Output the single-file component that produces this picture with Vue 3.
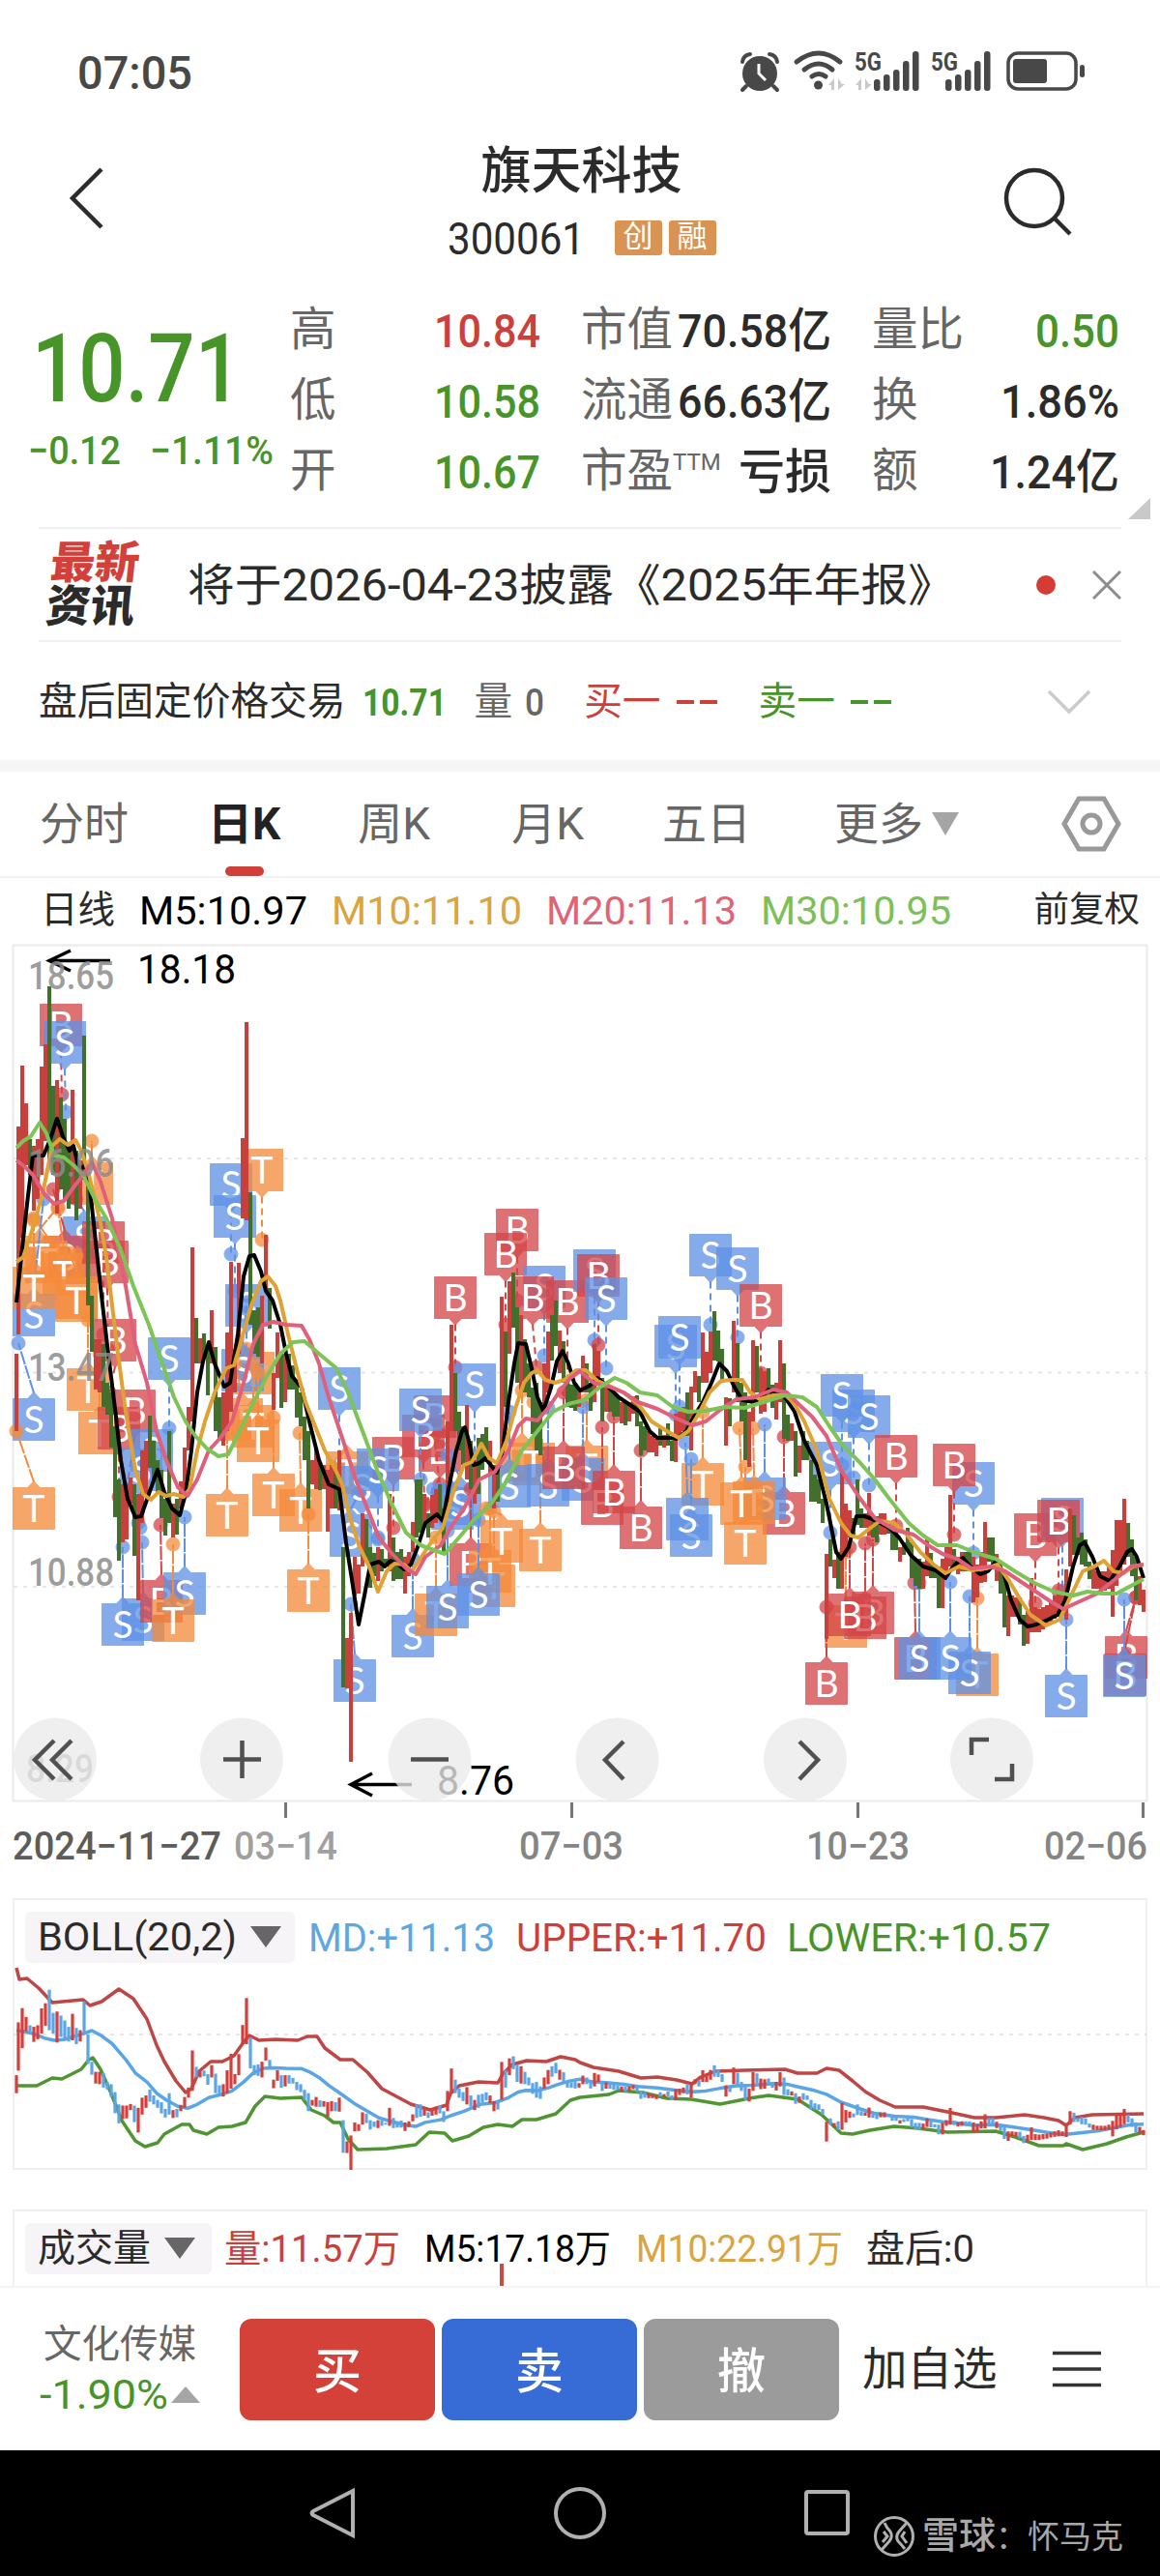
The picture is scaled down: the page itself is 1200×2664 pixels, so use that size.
<template>
  <div class="phone">
    <div class="status">
      <Num text="07:05" :w="119" :size="49" :weight="500" />
      <svg class="status-icons" width="360" height="50" viewBox="764 49 360 50">
        <circle cx="786" cy="76" r="18" />
        <g class="stroke">
          <path d="M768 64q1-7 8-8M804 64q-1-7-8-8M772 89l-4 4M800 89l4 4" stroke-width="4" />
          <path d="M824 64q23-18 45 0M832 72q15-12 29 0M840 79q7-5 14 0" stroke-width="5" />
        </g>
        <path d="M785 66v10l7 7" fill="none" stroke="#fff" stroke-width="3" />
        <circle cx="846.500" cy="88" r="4.500" />
        <path class="pale" d="M863 81v12h-3v-5h-3zM867 81v12l7-6h-3zM891 81v12h-3v-5h-3zM895 81v12l7-6h-3z" />
        <text x="884" y="73" textLength="28" lengthAdjust="spacingAndGlyphs">5G</text>
        <text x="963" y="73" textLength="28" lengthAdjust="spacingAndGlyphs">5G</text>
        <template v-for="sx in [904, 978]" :key="sx">
          <rect v-for="(bh, i) in [12, 17, 22, 31, 41]" :key="i" :x="sx + i * 10" :y="94 - bh" width="6.500" :height="bh" rx="3" />
        </template>
        <rect x="1043" y="55" width="70" height="37" rx="10" fill="none" stroke="#484848" stroke-width="3.500" />
        <rect x="1048" y="61" width="35" height="25" rx="3" />
        <rect x="1117" y="67" width="5" height="13" rx="2.500" />
      </svg>
    </div>

    <header class="header">
      <svg class="back" width="40" height="68" viewBox="0 0 40 68"><path d="M35 4L5 34L35 64" /></svg>
      <div class="title">
        <h1>旗天科技</h1>
        <div class="code">
          <Num text="300061" :w="142" :size="47" />
          <span class="badge">创</span>
          <span class="badge">融</span>
        </div>
      </div>
      <svg class="search" width="74" height="74" viewBox="0 0 74 74"><circle cx="32" cy="32" r="29" /><path d="M53 53l16 16" /></svg>
    </header>

    <section class="quote">
      <div class="price green">
        <Num text="10.71" :w="217" :size="99" :weight="500" />
        <div class="change">
          <Num text="−0.12" :w="96" :size="41" :weight="500" />
          <Num text="−1.11%" :w="128" :size="41" :weight="500" />
        </div>
      </div>
      <div class="stats">
        <div v-for="s in stats" :key="s.label" class="stat">
          <span class="stat-label">{{ s.label }}<sup v-if="s.sup">{{ s.sup }}</sup></span>
          <Num :class="s.color" :text="s.value" :w="s.w" :size="49" :weight="500" />
        </div>
      </div>
      <i class="corner"></i>
    </section>

    <section class="news">
      <div class="news-logo"><b>最新</b><b>资讯</b></div>
      <Num class="news-text" text="将于2026-04-23披露《2025年年报》" :w="794" :size="46" />
      <i class="dot"></i>
      <svg width="30" height="30" viewBox="0 0 30 30"><path d="M1 1l28 28M29 1L1 29" /></svg>
    </section>

    <section class="after">
      <span>盘后固定价格交易</span>
      <Num class="green a1" text="10.71" :w="87" :size="39" :weight="700" />
      <span class="gray a2">量</span>
      <Num class="gray a3" text="0" :w="20" :size="39" :weight="500" />
      <span class="red a4">买一</span>
      <i class="dashes red"></i>
      <span class="green a5">卖一</span>
      <i class="dashes green"></i>
      <svg class="down" width="46" height="28" viewBox="0 0 46 28"><path d="M2 3l21 21L44 3" /></svg>
    </section>

    <nav class="tabs">
      <span class="t-time">分时</span>
      <span class="t-day">日K</span>
      <span class="t-week">周K</span>
      <span class="t-month">月K</span>
      <span class="t-five">五日</span>
      <span class="t-more">更多</span>
      <svg class="more-tri" width="28" height="24" viewBox="0 0 28 24"><path d="M0 0h28L14 24z" /></svg>
      <svg class="hex" width="62" height="58" viewBox="0 0 62 58"><path d="M18 3h26l15 26-15 26H18L3 29z" /><circle cx="31" cy="29" r="9" /></svg>
    </nav>

    <div class="ma">
      <span>日线</span>
      <Num text="M5:10.97" :w="174" :size="41" class="black" />
      <Num text="M10:11.10" :w="197" :size="41" class="gold" />
      <Num text="M20:11.13" :w="197" :size="41" class="pink" />
      <Num text="M30:10.95" :w="197" :size="41" class="lime" />
      <span class="fq">前复权</span>
    </div>

    <svg class="kline" width="1200" height="889" viewBox="0 975 1200 889">
      <path class="frame" d="M13.500 977.500H1186.500V1862.500H13.500z" />
      <path class="grid" d="M14 1198H1186M14 1419.500H1186M14 1641H1186" />
      <g v-for="(m, i) in marks" :key="'m' + i" :class="'mark mark-' + m.type">
        <line :x1="m.x" :y1="m.edge" :x2="m.px" :y2="m.py" :stroke-dasharray="m.dash" />
        <circle :cx="m.px" :cy="m.py" r="7" />
        <path class="tag" :d="m.shape" />
        <text :x="m.x" :y="m.y + 14">{{ m.type }}</text>
      </g>
      <rect v-for="c in candles" :key="c.x" :class="c.up ? 'up' : 'fall'" :x="c.x - 2" :y="c.hi" width="4.100" :height="c.lo - c.hi" />
      <polyline class="line" stroke="#000" :points="ma5" />
      <polyline class="line" stroke="#dfa233" :points="ma10" />
      <polyline class="line" stroke="#e0607c" :points="ma20" />
      <polyline class="line" stroke="#7cc455" :points="ma30" />
      <path class="arrow" d="M114 993.500H51M73 983L51 993.500L73 1004" />
      <text class="peak" x="142" y="1017" textLength="102" lengthAdjust="spacingAndGlyphs">18.18</text>
      <path class="arrow" d="M426 1845.500H363M385 1834L363 1845.500L385 1857" />
      <text class="peak" x="452" y="1856" textLength="80" lengthAdjust="spacingAndGlyphs">8.76</text>
      <g class="axis">
        <text v-for="l in axis" :key="l.t" :x="l.x" :y="l.y" :textLength="l.w" lengthAdjust="spacingAndGlyphs">{{ l.t }}</text>
      </g>
      <g class="ctrl">
        <circle v-for="x in [57, 250, 444.500, 638.500, 833, 1026]" :key="x" :cx="x" cy="1819.500" r="43" />
        <path d="M56 1800L36 1820L56 1840M74 1800L54 1820L74 1840" />
        <path d="M231 1819.500H270M250.500 1800V1839M425 1819.500H464" />
        <path d="M645 1801L626 1820L645 1840M827 1801L846 1820L827 1840" />
        <path d="M1005 1815V1799H1023M1029 1840H1047V1824" />
      </g>
    </svg>

    <div class="dates">
      <i v-for="n in 4" :key="n" :class="'tick tick-' + n"></i>
      <Num text="2024−11−27" :w="216" :size="40" :weight="500" class="first" />
      <Num text="03−14" :w="107" :size="40" :weight="500" class="d2" />
      <Num text="07−03" :w="108" :size="40" :weight="500" class="d3" />
      <Num text="10−23" :w="107" :size="40" :weight="500" class="d4" />
      <Num text="02−06" :w="107" :size="40" :weight="500" class="d5" />
    </div>

    <section class="panel boll">
      <div class="panel-head">
        <div class="picker">
          <Num text="BOLL(20,2)" :w="206" :size="40" />
          <svg width="32" height="22" viewBox="0 0 32 22"><path d="M0 0h32L16 22z" /></svg>
        </div>
        <Num text="MD:+11.13" :w="193" :size="41" class="blue" />
        <Num text="UPPER:+11.70" :w="259" :size="41" class="red" />
        <Num text="LOWER:+10.57" :w="273" :size="41" class="green" />
      </div>
      <svg class="boll-chart" width="1172" height="213" viewBox="14 2031 1172 213">
        <path class="grid" d="M14 2104H1186" />
        <polyline class="line" stroke="#c04545" :points="upper" />
        <polyline class="line" stroke="#4f9632" :points="lower" />
        <polyline class="line" stroke="#5aa5e6" :points="mid" />
        <rect v-for="c in candles" :key="c.x" :fill="c.up ? '#d3403c' : '#5aa5e6'" :x="c.x - 1.600" :y="bollY(c.hi)" width="3.200" :height="bollY(c.lo) - bollY(c.hi)" />
      </svg>
    </section>

    <section class="panel volume">
      <div class="panel-head">
        <div class="picker">
          <span>成交量</span>
          <svg width="32" height="22" viewBox="0 0 32 22"><path d="M0 0h32L16 22z" /></svg>
        </div>
        <Num text="量:11.57万" :w="182" :size="39" class="red" />
        <Num text="M5:17.18万" :w="193" :size="39" class="black v5" />
        <Num text="M10:22.91万" :w="214" :size="39" class="gold v10" />
        <Num text="盘后:0" :w="112" :size="39" />
      </div>
      <i class="vol-bar"></i>
    </section>

    <footer class="actions">
      <div class="sector">
        <span>文化传媒</span>
        <div class="sector-change">
          <Num text="-1.90%" :w="133" :size="42" class="green" />
          <svg width="30" height="17" viewBox="0 0 30 17"><path d="M0 17h30L15 0z" /></svg>
        </div>
      </div>
      <button class="buy">买</button>
      <button class="sell">卖</button>
      <button class="cancel">撤</button>
      <span class="add">加自选</span>
      <svg class="menu" width="50" height="40" viewBox="0 0 50 40"><path d="M0 3.500H50M0 20H50M0 36.500H50" /></svg>
    </footer>

    <div class="sysnav">
      <svg width="564" height="60" viewBox="319 2569 564 60">
        <path d="M365 2576V2622L324 2601Q321 2599 324 2597z" />
        <circle cx="600" cy="2599" r="25" />
        <rect x="834" y="2577" width="43" height="43" rx="2" />
      </svg>
      <div class="watermark">
        <svg width="44" height="44" viewBox="0 0 44 44"><circle cx="22" cy="22" r="19.500" /><path d="M12 8q2 5 6 9 3 5-1 10l-8 9M35 8l-8 9q-4 5-1 10 4 4 7 8M11 17l4 5-5 6M33 17l-3 5 5 7" /></svg>
        <span><b>雪球</b>：怀马克</span>
      </div>
    </div>
  </div>
</template>

<script setup>
import { h } from 'vue';

// Condensed numerals: text is squeezed to a given advance width, box height is the cap height
const Num = (props) =>
  h('svg', { class: 'num', width: props.w, height: Math.round(props.size * 0.71) }, [
    h('text', {
      x: 0,
      y: Math.round(props.size * 0.71),
      'font-size': props.size,
      'font-weight': props.weight || 400,
      fill: 'currentColor',
      textLength: props.w,
      lengthAdjust: 'spacingAndGlyphs',
    }, props.text),
  ]);
Num.props = ['text', 'w', 'size', 'weight'];

const stats = [
  { label: '高', value: '10.84', w: 110, color: 'red' },
  { label: '市值', value: '70.58亿', w: 159 },
  { label: '量比', value: '0.50', w: 87, color: 'green' },
  { label: '低', value: '10.58', w: 110, color: 'green' },
  { label: '流通', value: '66.63亿', w: 159 },
  { label: '换', value: '1.86%', w: 123 },
  { label: '开', value: '10.67', w: 110, color: 'green' },
  { label: '市盈', sup: 'TTM', value: '亏损', w: 96 },
  { label: '额', value: '1.24亿', w: 134 },
];

const axis = [
  { t: '18.65', x: 29, y: 1023, w: 89 },
  { t: '16.06', x: 29, y: 1217, w: 89 },
  { t: '13.47', x: 29, y: 1428, w: 89 },
  { t: '10.88', x: 29, y: 1640, w: 89 },
  { t: '8.29', x: 27, y: 1843, w: 70 },
];

// x high low, in chart pixels; r = rising, g = falling
const raw = `17r1400 1480,19r1165 1380,23r1102 1280,27r1141 1205,31g1178 1215,35r1185 1252,39r1178 1240,43r1103 1215,47r1080 1180,51g1020 1200,55g1123 1215,59r1117 1255,63g1135 1230,67g1157 1240,71g1185 1250,75r1127 1245,79g1190 1262,83r1200 1250,87g1071 1220,91g1218 1350,95g1340 1398,99r1385 1437,103r1385 1440,107g1390 1455,111g1430 1463,115g1440 1497,119g1475 1569,123g1530 1614,127r1535 1595,131r1535 1592,135r1528 1555,139g1535 1609,143r1545 1655,147r1500 1575,151r1490 1545,155g1464 1518,159g1490 1530,163g1510 1545,167g1520 1570,171g1550 1588,175g1480 1575,179r1555 1590,183g1550 1587,187r1532 1560,191r1497 1545,195r1455 1500,199r1290 1470,203g1363 1410,207r1384 1410,211g1379 1405,215g1395 1443,219r1355 1410,223g1393 1480,227g1445 1490,231r1440 1495,235r1378 1480,239r1305 1460,243r1395 1440,247r1306 1400,251r1177 1260,255r1057 1262,259g1233 1370,263g1355 1400,267g1352 1403,271r1340 1410,275r1277 1335,279g1332 1374,283r1420 1458,287r1378 1425,291g1400 1456,295r1400 1450,299g1400 1437,303g1412 1437,307g1430 1466,311g1440 1475,315g1465 1510,319g1480 1560,323r1510 1535,327r1497 1540,331g1512 1541,335r1515 1540,339r1520 1584,343r1515 1560,347g1520 1560,351r1500 1562,355g1600 1745,359r1694 1746,363r1668 1822,367r1610 1650,371r1618 1648,375r1565 1620,379g1571 1613,383g1600 1642,387g1606 1630,391r1600 1635,395g1602 1625,399g1612 1620,403r1545 1625,407g1590 1635,411g1605 1633,415g1602 1633,419r1610 1648,423r1605 1630,427r1574 1605,431g1530 1590,435g1530 1585,439r1545 1580,443g1565 1590,447r1546 1580,451r1540 1575,455g1535 1570,459g1560 1608,463r1470 1560,467r1370 1480,471g1420 1480,475g1460 1500,479g1475 1515,483r1453 1530,487g1490 1540,491r1510 1555,495g1487 1545,499g1483 1520,503g1476 1512,507r1490 1525,511r1515 1560,515g1520 1553,519r1341 1510,523g1377 1455,527r1325 1400,531g1316 1373,535g1352 1430,539r1360 1437,543g1385 1440,547g1410 1445,551g1435 1483,555g1430 1500,559g1450 1505,563r1410 1460,567r1377 1440,571g1360 1407,575g1345 1392,579r1376 1420,583g1387 1430,587g1425 1455,591g1432 1456,595g1430 1459,599r1435 1455,603r1402 1440,607g1410 1440,611g1430 1459,615r1390 1450,619r1397 1430,623g1425 1470,627r1432 1460,631g1435 1460,635g1440 1465,639g1445 1465,643r1450 1472,647g1450 1474,651r1450 1470,655r1444 1462,659g1443 1475,663g1470 1505,667g1475 1500,671r1480 1502,675r1485 1502,679r1488 1506,683g1476 1495,687r1484 1497,691g1472 1495,695g1490 1511,699r1462 1512,703r1460 1488,707r1455 1480,711g1440 1485,715r1434 1500,719r1418 1440,723g1423 1450,727r1378 1430,731r1398 1430,735r1377 1420,739g1356 1407,743g1376 1408,747g1395 1430,751r1445 1495,755g1446 1475,759r1366 1440,763g1389 1450,767g1430 1470,771g1440 1510,775r1460 1517,779r1386 1470,783g1392 1440,787r1415 1462,791r1418 1460,795g1415 1445,799g1432 1456,803r1430 1468,807r1386 1450,811g1410 1488,815g1463 1490,819r1472 1490,823g1480 1527,827r1495 1523,831g1480 1510,835g1490 1510,839g1510 1553,843g1525 1553,847g1530 1555,851g1550 1575,855r1607 1695,859g1592 1620,863r1613 1632,867g1605 1643,871r1523 1643,875r1555 1610,879r1562 1590,883g1570 1587,887g1530 1577,891g1560 1580,895r1565 1580,899r1544 1588,903g1568 1590,907g1568 1595,911r1565 1587,915r1565 1587,919g1575 1586,923g1580 1603,927g1585 1603,931r1600 1615,935g1595 1608,939g1580 1605,943g1595 1632,947g1612 1640,951g1612 1643,955r1615 1643,959r1592 1630,963g1606 1632,967g1618 1632,971g1620 1663,975r1612 1663,979r1600 1625,983r1546 1620,987g1602 1622,991r1610 1628,995r1605 1625,999g1605 1625,1003g1605 1625,1007r1610 1657,1011r1618 1652,1015r1605 1637,1019r1574 1636,1023g1590 1615,1027g1590 1623,1031r1607 1635,1035g1615 1648,1039g1630 1683,1043r1650 1692,1047r1650 1672,1051r1652 1672,1055g1652 1680,1059g1670 1702,1063r1665 1700,1067r1632 1688,1071r1662 1688,1075r1664 1688,1079r1662 1685,1083r1660 1682,1087r1655 1677,1091r1650 1674,1095r1645 1672,1099r1650 1670,1103r1623 1675,1107r1560 1620,1111g1567 1608,1115g1590 1608,1119g1585 1618,1123g1592 1620,1127g1615 1633,1131r1620 1643,1135r1625 1643,1139r1625 1645,1143r1625 1645,1147r1620 1643,1151r1603 1672,1155r1572 1640,1159r1572 1630,1163r1550 1618,1167g1575 1610,1171g1592 1630,1175g1610 1655,1179r1630 1660,1183r1644 1667`;
const candles = raw.split(',').map((s) => {
  const [, x, dir, hi, lo] = s.match(/(\d+)([rg])(\d+) (\d+)/);
  return { x: +x, up: dir === 'r', hi: +hi, lo: +lo };
});

const ma5 = '17,1347 22,1300 28,1245 34,1195 45,1195 52,1178 59,1157 66,1178 72,1190 76,1185 82,1210 88,1205 92,1220 98,1275 105,1340 112,1400 120,1465 125,1510 132,1550 140,1569 146,1568 154,1545 163,1520 170,1543 178,1560 186,1567 192,1545 198,1500 204,1440 210,1408 216,1388 222,1410 232,1434 238,1430 246,1380 252,1320 258,1299 263,1298 270,1315 275,1335 282,1345 290,1370 296,1400 302,1423 312,1435 320,1470 330,1510 340,1535 351,1540 358,1595 365,1640 371,1680 377,1650 383,1618 392,1615 398,1620 404,1614 412,1618 418,1623 425,1618 432,1600 440,1575 452,1566 458,1573 464,1540 472,1500 478,1480 481,1476 485,1490 490,1515 496,1513 502,1508 514,1523 520,1500 526,1450 532,1410 536,1389 544,1390 550,1415 556,1445 562,1459 570,1435 576,1408 582,1397 588,1410 594,1430 600,1438 610,1433 618,1425 628,1433 640,1445 652,1453 662,1460 672,1480 680,1487 692,1487 700,1488 710,1480 718,1465 727,1450 736,1430 744,1410 752,1418 760,1435 768,1448 780,1450 788,1445 795,1437 800,1442 806,1438 814,1448 822,1460 832,1490 845,1515 855,1555 865,1605 870,1612 878,1600 886,1568 894,1568 900,1570 910,1575 920,1580 930,1590 942,1608 955,1620 968,1624 978,1632 986,1620 996,1611 1004,1620 1014,1628 1022,1625 1030,1615 1038,1626 1046,1655 1055,1675 1063,1682 1072,1680 1084,1675 1094,1670 1102,1655 1110,1620 1117,1598 1122,1595 1130,1610 1138,1630 1148,1635 1158,1620 1166,1605 1171,1602 1176,1610 1183,1632';
const ma10 = '17,1305 24,1300 34,1270 44,1235 54,1185 62,1178 70,1184 78,1179 84,1190 92,1215 98,1240 104,1265 110,1300 116,1350 122,1400 130,1460 140,1520 148,1545 156,1551 164,1543 172,1547 180,1545 190,1548 196,1540 204,1500 212,1470 222,1440 234,1415 242,1412 250,1385 260,1350 270,1325 277,1320 285,1330 290,1345 298,1380 308,1420 316,1450 326,1475 336,1500 346,1518 354,1535 362,1570 372,1600 382,1620 391,1646 400,1625 408,1617 418,1618 426,1625 436,1610 446,1595 458,1580 470,1540 480,1515 488,1512 498,1493 506,1508 514,1513 524,1490 532,1460 542,1430 550,1420 556,1417 564,1427 574,1430 584,1427 596,1417 606,1417 618,1428 630,1433 645,1440 660,1452 674,1470 690,1480 702,1487 712,1480 724,1460 734,1440 746,1428 758,1427 768,1427 776,1440 786,1447 800,1443 812,1442 822,1452 832,1470 845,1500 858,1550 870,1575 880,1588 888,1590 898,1582 910,1573 925,1575 938,1587 952,1605 966,1618 978,1627 992,1620 1006,1624 1020,1622 1032,1618 1044,1635 1056,1655 1066,1670 1082,1681 1096,1675 1108,1650 1120,1625 1132,1620 1142,1614 1152,1625 1162,1627 1172,1620 1183,1618';
const ma20 = '17,1200 25,1206 34,1215 46,1235 56,1245 66,1242 76,1228 86,1215 95,1202 104,1222 116,1260 130,1330 140,1390 152,1430 162,1480 172,1510 184,1538 194,1547 204,1530 216,1500 228,1487 240,1470 252,1430 262,1390 272,1370 283,1367 296,1370 312,1371 320,1385 330,1410 340,1445 355,1490 368,1530 380,1560 392,1590 404,1605 420,1622 430,1628 440,1610 456,1598 466,1580 480,1560 496,1530 512,1522 526,1500 536,1475 544,1467 556,1469 568,1455 578,1440 590,1425 600,1418 614,1430 630,1434 645,1440 660,1450 680,1457 700,1467 716,1474 730,1470 745,1458 762,1447 780,1445 800,1437 814,1440 826,1452 840,1465 855,1485 870,1520 890,1550 905,1570 925,1582 945,1587 960,1598 975,1607 990,1612 1005,1622 1025,1620 1040,1625 1055,1635 1070,1645 1085,1655 1100,1664 1115,1657 1135,1648 1155,1632 1170,1620 1183,1618';
const ma30 = '17,1187 24,1180 32,1175 41,1161 48,1172 56,1195 66,1197 76,1205 86,1215 98,1240 110,1260 124,1290 138,1330 154,1370 168,1410 180,1445 192,1470 202,1485 214,1498 226,1506 236,1504 248,1480 260,1455 275,1425 290,1400 303,1388 315,1387 330,1400 348,1415 360,1440 375,1480 390,1520 405,1555 420,1585 435,1598 460,1607 475,1590 490,1572 508,1555 522,1535 540,1500 556,1480 572,1460 588,1452 604,1448 620,1435 636,1425 648,1430 662,1440 680,1443 696,1455 712,1460 730,1459 750,1455 770,1456 790,1450 812,1443 830,1445 845,1455 858,1475 872,1495 890,1513 905,1530 920,1550 940,1575 955,1588 970,1598 990,1598 1010,1606 1030,1612 1050,1625 1070,1637 1090,1646 1110,1650 1125,1646 1140,1648 1155,1648 1170,1640 1183,1633';

const upper = '17,2035 20,2047 28,2046 40,2056 54,2071 75,2069 86,2068 93,2074 105,2070 123,2057 138,2067 152,2088 162,2115 170,2132 182,2152 192,2164 198,2160 206,2142 218,2132 230,2132 242,2126 252,2112 258,2105 268,2110 285,2109 308,2110 318,2106 328,2106 336,2118 352,2130 365,2130 380,2143 395,2160 410,2168 425,2176 445,2182 462,2177 466,2165 475,2157 495,2153 515,2154 520,2145 530,2135 545,2131 565,2132 580,2127 595,2130 600,2133 614,2138 640,2142 663,2149 680,2148 700,2151 716,2155 725,2148 740,2142 770,2141 812,2140 825,2144 845,2144 855,2139 868,2141 882,2152 895,2163 910,2172 926,2179 955,2179 985,2185 1008,2190 1030,2190 1060,2187 1080,2190 1095,2193 1103,2198 1112,2190 1130,2187 1183,2186';
const lower = '17,2157 38,2157 54,2149 64,2150 84,2140 92,2130 96,2128 104,2140 115,2165 126,2193 140,2214 150,2220 163,2216 170,2207 188,2197 196,2197 200,2203 214,2207 226,2200 240,2199 254,2195 264,2178 274,2168 290,2170 312,2169 322,2182 336,2188 345,2195 352,2195 360,2212 370,2223 400,2222 430,2218 444,2205 460,2206 468,2214 485,2209 500,2200 515,2197 530,2199 540,2192 555,2192 575,2186 590,2172 600,2169 630,2166 640,2162 665,2164 690,2170 715,2171 745,2176 775,2170 795,2167 825,2171 850,2187 870,2206 882,2207 900,2203 925,2199 950,2201 980,2205 1030,2204 1050,2210 1075,2219 1100,2219 1103,2217 1120,2223 1145,2217 1165,2210 1183,2205';

// The BOLL panel shows the same prices on a smaller scale, its middle line is the 20-day average
const bollY = (y) => 2057 + (y - 1017) * 0.2326;
const mid = ma20.split(' ').map((p) => {
  const [x, y] = p.split(',');
  return `${x},${bollY(+y).toFixed(1)}`;
}).join(' ');

// type, tag centre x y, point x y
const marks = [
  ['B', 63, 1060, 64, 1132], ['S', 67, 1078, 68, 1150],
  ['T', 95, 1224, 95, 1180], ['S', 87, 1280, 79, 1240], ['B', 67, 1300, 55, 1230], ['T', 48, 1305, 35, 1260], ['T', 40, 1300, 60, 1248],
  ['T', 66, 1318, 60, 1250], ['B', 107, 1285, 107, 1380], ['B', 111, 1305, 112, 1396],
  ['S', 35, 1360, 45, 1240], ['T', 35, 1332, 35, 1262], ['T', 79, 1342, 72, 1296], ['T', 79, 1345, 79, 1298],
  ['B', 119, 1386, 113, 1440], ['S', 35, 1468, 19, 1389], ['T', 35, 1560, 17, 1480],
  ['T', 91, 1437, 91, 1365], ['T', 103, 1482, 103, 1400], ['B', 139, 1459, 131, 1540], ['B', 123, 1477, 123, 1548],
  ['S', 157, 1500, 145, 1580], ['S', 146, 1520, 143, 1575],
  ['S', 175, 1405, 175, 1477], ['S', 148, 1675, 147, 1595], ['S', 127, 1680, 127, 1600],
  ['B', 167, 1656, 166, 1577], ['S', 191, 1648, 191, 1569], ['T', 179, 1676, 179, 1597],
  ['S', 239, 1225, 239, 1297], ['S', 243, 1258, 243, 1335], ['T', 271, 1210, 271, 1282],
  ['S', 255, 1350, 255, 1400], ['T', 262, 1420, 255, 1395], ['S', 251, 1417, 255, 1350], ['T', 250, 1468, 243, 1410],
  ['T', 262, 1475, 262, 1410], ['T', 267, 1490, 267, 1420],
  ['T', 235, 1567, 235, 1482], ['T', 283, 1546, 283, 1466], ['T', 311, 1562, 310, 1482], ['T', 319, 1645, 319, 1566],
  ['S', 351, 1436, 351, 1515], ['T', 359, 1523, 343, 1520], ['S', 363, 1588, 371, 1545], ['S', 374, 1538, 391, 1590],
  ['S', 367, 1738, 363, 1659], ['B', 407, 1508, 407, 1580], ['S', 391, 1520, 391, 1592],
  ['B', 455, 1500, 439, 1557], ['B', 450, 1465, 455, 1535], ['B', 438, 1485, 439, 1555], ['S', 435, 1458, 435, 1530],
  ['S', 468, 1560, 448, 1540], ['S', 476, 1555, 463, 1505],
  ['B', 471, 1342, 471, 1414], ['S', 491, 1432, 491, 1505],
  ['S', 427, 1692, 427, 1612], ['T', 451, 1670, 451, 1590], ['B', 487, 1618, 487, 1540], ['S', 463, 1662, 463, 1583],
  ['T', 511, 1640, 511, 1563], ['T', 507, 1625, 507, 1560], ['S', 495, 1649, 495, 1572], ['T', 519, 1594, 503, 1560], ['T', 559, 1603, 559, 1520],
  ['T', 540, 1510, 540, 1438], ['T', 552, 1514, 552, 1450], ['S', 527, 1537, 527, 1460], ['S', 567, 1536, 567, 1456], ['T', 607, 1517, 607, 1448],
  ['S', 603, 1530, 603, 1455], ['B', 583, 1518, 583, 1440],
  ['B', 623, 1555, 623, 1476], ['B', 635, 1543, 635, 1465], ['B', 663, 1580, 663, 1500],
  ['B', 535, 1272, 535, 1345], ['B', 523, 1297, 523, 1370], ['S', 563, 1331, 563, 1402], ['B', 551, 1342, 555, 1414], ['B', 587, 1346, 587, 1438],
  ['S', 615, 1314, 615, 1386], ['B', 619, 1319, 619, 1391], ['S', 627, 1343, 627, 1415],
  ['S', 699, 1392, 699, 1463], ['S', 703, 1383, 703, 1455], ['S', 735, 1298, 735, 1370], ['S', 763, 1312, 763, 1383],
  ['B', 787, 1350, 787, 1420], ['T', 727, 1535, 727, 1460], ['S', 715, 1588, 715, 1509], ['S', 711, 1571, 709, 1492],
  ['B', 811, 1565, 811, 1486], ['S', 791, 1550, 791, 1473], ['T', 780, 1554, 779, 1477], ['T', 771, 1596, 771, 1517], ['T', 767, 1555, 765, 1477],
  ['S', 859, 1513, 859, 1585], ['S', 883, 1459, 883, 1528], ['S', 871, 1443, 871, 1515], ['S', 899, 1465, 899, 1536],
  ['B', 927, 1506, 927, 1578], ['S', 1007, 1534, 1007, 1606], ['B', 987, 1515, 987, 1587],
  ['T', 875, 1682, 875, 1605], ['B', 903, 1668, 903, 1592], ['B', 895, 1673, 895, 1596], ['B', 879, 1670, 879, 1600], ['B', 855, 1741, 855, 1662],
  ['B', 947, 1715, 946, 1637], ['S', 951, 1715, 951, 1637], ['T', 1011, 1732, 1011, 1653], ['S', 1003, 1730, 1003, 1651], ['S', 983, 1715, 983, 1636],
  ['B', 1071, 1587, 1071, 1658], ['S', 1099, 1571, 1099, 1645], ['B', 1095, 1573, 1095, 1645], ['S', 1103, 1754, 1103, 1675],
  ['B', 1165, 1714, 1175, 1652], ['B', 1164, 1732, 1175, 1652], ['S', 1163, 1733, 1163, 1654],
].map(([type, x, y, px, py]) => {
  const below = y > py;
  const l = x - 21.5;
  const t = y - 21.5;
  const tip = below ? `h15l6.500 -7l6.500 7h15v43h-43z` : `h43v43h-15l-6.500 7l-6.500 -7h-15z`;
  return { type, x, y, px, py, edge: below ? t - 6 : t + 49, dash: below ? '14 1.5' : '7 5', shape: `M${l} ${t}${tip}` };
});
</script>

<style>
body {
  background: #fff;
}
</style>

<style scoped>
.phone {
  position: relative;
  width: 1200px;
  height: 2664px;
  overflow: hidden;
  background: #fff;
  color: #2b2b2b;
  font-family: Roboto, "Noto Sans CJK SC", sans-serif;
}

svg {
  display: block;
  flex: none;
}

.num {
  overflow: visible;
}

.red { color: #cc403c; }
.green { color: #479529; }
.gray { color: #666; }
.black { color: #000; }
.gold { color: #d9a441; }
.pink { color: #df6478; }
.lime { color: #7cc058; }
.blue { color: #5ea8e2; }

.status {
  display: flex;
  align-items: center;
  height: 148px;
  padding-left: 80px;
  color: #484848;
}

.status-icons {
  margin-left: 565px;
  overflow: visible;
  fill: #484848;
  font-size: 25px;
  font-weight: 700;
}

.status-icons .stroke {
  fill: none;
  stroke: #484848;
  stroke-linecap: round;
}

.pale { fill: #c9c9c9; }

.header {
  display: flex;
  height: 157px;
  padding-left: 70px;
}

.back,
.search {
  fill: none;
  stroke: #2b2b2b;
  stroke-width: 4.5;
}

.back { margin-top: 23px; }
.search { margin: 25px 0 0 295px; }

.title {
  display: flex;
  flex-direction: column;
  align-items: center;
  width: 283px;
  margin-left: 350px;
}

h1 {
  margin: 3px 0 0;
  font-size: 52px;
  line-height: 54px;
  font-weight: 500;
}

.code {
  display: flex;
  align-items: center;
  gap: 7px;
  height: 38px;
  margin-top: 22px;
}

.code .num { margin-right: 24px; }

.badge {
  width: 49px;
  height: 36px;
  border-radius: 3px;
  background: #d99352;
  color: #fff;
  font-size: 31px;
  line-height: 34px;
  text-align: center;
}

.quote {
  position: relative;
  display: flex;
  height: 240px;
}

.price {
  width: 300px;
  padding: 40px 0 0 33px;
  box-sizing: border-box;
}

.change {
  display: flex;
  justify-content: space-between;
  width: 254px;
  margin: 36px 0 0 -4px;
}

.stats {
  display: grid;
  grid-template-columns: 259px 259px 256px;
  grid-auto-rows: 73px;
  column-gap: 42px;
}

.stat {
  display: flex;
  align-items: center;
  justify-content: space-between;
}

.stat-label {
  color: #666;
  font-size: 47.500px;
  line-height: 71px;
  white-space: nowrap;
}

.stat-label sup {
  font-size: 24px;
  line-height: 0;
  vertical-align: 17px;
}

.corner {
  position: absolute;
  right: 10px;
  bottom: 8px;
  border-left: 23px solid transparent;
  border-bottom: 22px solid #c9c9c9;
}

.news {
  display: flex;
  align-items: center;
  height: 119px;
  margin: 0 40px;
  box-sizing: border-box;
  border-top: 2px solid #f0f0f0;
  border-bottom: 2px solid #f0f0f0;
}

.news-logo {
  display: flex;
  flex-direction: column;
  width: 94px;
  margin-left: 10px;
  transform: skewX(-6deg);
  font-size: 46px;
  line-height: 45px;
}

.news-logo b:first-child { color: #d3403a; }
.news-logo b { font-weight: 900; }
.news-text { margin-left: 50px; }

.dot {
  width: 20px;
  height: 20px;
  margin-left: 84px;
  border-radius: 50%;
  background: #d53c35;
}

.news svg:last-child {
  margin-left: 38px;
  stroke: #8c8c8c;
  stroke-width: 3;
}

.after {
  display: flex;
  align-items: center;
  height: 122px;
  padding: 1px 0 0 40px;
  box-sizing: border-box;
  font-size: 39.700px;
  line-height: 1;
  white-space: nowrap;
}

.a1 { margin-left: 17px; }
.a2 { margin-left: 29px; }
.a3 { margin-left: 13px; }
.a4 { margin-left: 41px; }
.a5 { margin-left: 43px; }

.dashes {
  width: 18px;
  height: 4px;
  margin: 0 24px 0 16px;
  background: currentColor;
  box-shadow: 24px 0 0 currentColor;
}

.down { margin-left: auto; margin-right: 71px; }

.down path {
  fill: none;
  stroke: #ccc;
  stroke-width: 3.5;
}

.tabs {
  display: flex;
  align-items: center;
  height: 108px;
  padding-left: 41px;
  border-top: 12px solid #f6f6f6;
  border-bottom: 2px solid #f1f1f1;
  color: #666;
  font-size: 46px;
  line-height: 108px;
  white-space: nowrap;
}

.t-day {
  position: relative;
  margin-left: 82px;
  color: #222;
  font-weight: 700;
}

.t-day::after {
  content: "";
  position: absolute;
  left: 18px;
  bottom: 0;
  width: 40px;
  height: 10px;
  border-radius: 5px;
  background: #cf403a;
}

.t-week { margin-left: 80px; }
.t-month { margin-left: 84px; }
.t-five { margin-left: 81px; }
.t-more { margin-left: 86px; }
.more-tri { margin-left: 9px; fill: #a5a5a5; }

.hex {
  margin-left: auto;
  margin-right: 40px;
  fill: none;
  stroke: #999;
  stroke-width: 5;
}

.ma {
  display: flex;
  align-items: center;
  gap: 25px;
  height: 67px;
  padding-left: 42px;
  font-size: 38.500px;
  line-height: 1;
  white-space: nowrap;
}

.fq {
  margin-left: auto;
  margin-right: 21px;
  font-size: 36.500px;
}

.frame {
  fill: none;
  stroke: #eaeaea;
  stroke-width: 2;
}

.grid {
  stroke: #e6e6e6;
  stroke-width: 2;
  stroke-dasharray: 4 6;
}

.up { fill: #c8403c; }
.fall { fill: #42702c; }

.line {
  fill: none;
  stroke-width: 3.5;
  stroke-linejoin: round;
}

.kline .line { stroke-width: 4; }

.mark line { stroke-width: 2; }
.mark circle { opacity: 0.75; }
.mark .tag { opacity: 0.76; stroke-width: 1; stroke-linejoin: round; }

.mark text {
  fill: #fff;
  stroke: none;
  font-family: Lato, sans-serif;
  font-size: 39px;
  text-anchor: middle;
}

.mark-B { fill: #d44548; stroke: #d44548; }
.mark-S { fill: #5f92e6; stroke: #5f92e6; }
.mark-T { fill: #f58b3c; stroke: #f58b3c; }

.axis {
  fill: #8c8c8c;
  fill-opacity: 0.85;
  font-size: 40px;
  font-weight: 500;
}

.arrow {
  fill: none;
  stroke: #000;
  stroke-width: 3.500;
}

.peak {
  fill: #000;
  font-size: 42px;
}

.ctrl circle {
  fill: #ebebeb;
  fill-opacity: 0.78;
}

.ctrl path {
  fill: none;
  stroke: #505050;
  stroke-width: 4.500;
}

.dates {
  position: relative;
  display: flex;
  align-items: center;
  height: 89px;
  padding-left: 13px;
  color: #858585;
}

.first { color: #5c5c5c; }
.d2 { margin-left: 13px; color: #a0a0a0; }
.d3 { margin-left: 188px; }
.d4 { margin-left: 189px; }
.d5 { margin-left: 139px; }

.tick {
  position: absolute;
  top: 0;
  width: 3px;
  height: 16px;
  background: #777;
}

.tick-1 { left: 294px; }
.tick-2 { left: 590px; }
.tick-3 { left: 886px; }
.tick-4 { left: 1181px; }

.panel {
  position: relative;
  box-sizing: border-box;
  width: 1174px;
  margin: 0 13px;
  border: 2px solid #efefef;
}

.boll {
  height: 281px;
  margin-top: 10px;
}

.panel-head {
  display: flex;
  align-items: center;
  height: 76px;
  padding-left: 11px;
}

.picker {
  display: flex;
  align-items: center;
  gap: 14px;
  height: 53px;
  padding: 0 17px 0 13px;
  border-radius: 6px;
  background: #f6f4f6;
  font-size: 39px;
  line-height: 1;
}

.picker svg:last-child { fill: #666; }
.boll .picker { width: 249px; }
.boll .blue { margin-left: 14px; }
.boll .red { margin-left: 22px; }
.boll .green { margin-left: 21px; }

.boll-chart {
  margin: -10px 0 0 -1px;
}

.volume {
  height: 79px;
  margin-top: 41px;
  border-bottom: 0;
}

.volume .red { margin-left: 13px; }
.v5 { margin-left: 25px; }
.v10 { margin-left: 26px; margin-right: 24px; }

.vol-bar {
  position: absolute;
  left: 502px;
  bottom: 0;
  width: 4px;
  height: 23px;
  background: #c94b46;
}

.actions {
  display: flex;
  align-items: center;
  height: 170px;
  box-sizing: border-box;
  border-top: 2px solid #f3f3f3;
}

.sector {
  width: 248px;
  padding-left: 45px;
  box-sizing: border-box;
  color: #666;
  font-size: 39.500px;
  line-height: 40px;
}

.sector-change {
  display: flex;
  align-items: center;
  gap: 3px;
  height: 30px;
  margin: 16px 0 4px -4px;
}

.sector-change svg:last-child { fill: #a5a5a5; }

button {
  width: 202px;
  height: 105px;
  margin: 0 7px 0 0;
  padding: 0 0 4px;
  border: 0;
  border-radius: 12px;
  color: #fff;
  font: 500 50px "Noto Sans CJK SC", sans-serif;
}

.buy { background: #d34138; }
.sell { background: #376bd5; }
.cancel { background: #9b9b9b; }

.add {
  margin-left: 17px;
  font-size: 46.500px;
  line-height: 1;
}

.menu {
  margin-left: 57px;
  stroke: #333;
  stroke-width: 3.5;
}

.sysnav {
  position: relative;
  display: flex;
  align-items: center;
  height: 130px;
  padding-left: 319px;
  background: #000;
  fill: none;
  stroke: #b0b0b0;
  stroke-width: 4;
}

.watermark {
  position: absolute;
  left: 903px;
  bottom: 18px;
  display: flex;
  align-items: center;
  gap: 7px;
  color: #a8a8a8;
  font-size: 33px;
  line-height: 44px;
  white-space: nowrap;
  stroke-width: 3;
}

.watermark b {
  font-size: 38px;
  font-weight: 500;
}
</style>
